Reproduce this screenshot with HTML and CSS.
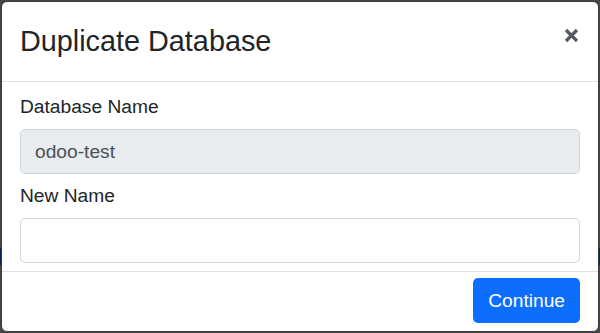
FILE: index.html
```html
<!DOCTYPE html>
<html lang="en">

<head>
    <meta charset="UTF-8">
    <meta name="viewport" content="width=device-width, initial-scale=1.0">
    <title>Duplicate Database</title>
    <link rel="stylesheet" href="styles.css">
</head>

<body>
    <div class="modal">
        <div class="modal-header">
            <h4 class="modal-title">Duplicate Database</h4>
            <button type="button" class="close" aria-label="Close">
                <svg width="15" height="15" viewBox="0 0 15 15">
                    <path d="M2 2 L13 13 M13 2 L2 13" stroke="currentColor" stroke-width="3.2" stroke-linecap="butt" fill="none" />
                </svg>
            </button>
        </div>
        <form class="modal-body">
            <div class="form-group">
                <label for="db-name">Database Name</label>
                <input type="text" id="db-name" name="name" value="odoo-test" readonly>
            </div>
            <div class="form-group">
                <label for="new-name">New Name</label>
                <input type="text" id="new-name" name="new_name">
            </div>
        </form>
        <div class="modal-footer">
            <button type="submit" class="btn-primary">Continue</button>
        </div>
    </div>
</body>

</html>
```

FILE: styles.css
```css
body {
    font-family: "Liberation Sans", Arial, sans-serif;
    margin: 0;
    padding: 1px;
    background: linear-gradient(to bottom, #454545 0, #454545 248px, #0e2450 248px, #0e2450 265px, #454545 265px);
    height: 333px;
    box-sizing: border-box;
    overflow: hidden;
}

.modal {
    width: 598px;
    height: 331px;
    box-sizing: border-box;
    background-color: #ffffff;
    border: 1px solid #3a3a3a;
    border-radius: 6px;
    overflow: hidden;
    display: flex;
    flex-direction: column;
    color: #212529;
}

.modal-header {
    display: flex;
    align-items: center;
    justify-content: space-between;
    height: 80px;
    box-sizing: border-box;
    padding: 18px 18px;
    border-bottom: 1px solid #dee2e6;
}

.modal-title {
    margin: 0;
    font-size: 28.8px;
    font-weight: normal;
    line-height: 43px;
}

.close {
    align-self: flex-start;
    border: none;
    background: none;
    padding: 0;
    margin-top: 8px;
    margin-right: 1px;
    color: #555a5e;
    cursor: pointer;
    display: flex;
}

.modal-body {
    padding: 10px 18px 8px;
    border-bottom: 1px solid #dee2e6;
}

.form-group {
    margin-bottom: 7px;
}

.form-group:last-child {
    margin-bottom: 0;
}

label {
    display: block;
    font-size: 19.2px;
    line-height: 29px;
    margin-bottom: 8px;
}

input[type="text"] {
    display: block;
    width: 100%;
    height: 45px;
    box-sizing: border-box;
    padding: 0 14px;
    border: 1px solid #ced4da;
    border-radius: 5px;
    font-family: inherit;
    font-size: 19.2px;
    color: #495057;
    background-color: #ffffff;
}

input[readonly] {
    background-color: #e9ecef;
}

.modal-footer {
    display: flex;
    justify-content: flex-end;
    padding: 6px 18px 8px;
}

.btn-primary {
    height: 45px;
    padding: 0 15px;
    border: none;
    border-radius: 5px;
    background-color: #0d6efd;
    color: #ffffff;
    font-family: inherit;
    font-size: 19.2px;
    cursor: pointer;
}
```
